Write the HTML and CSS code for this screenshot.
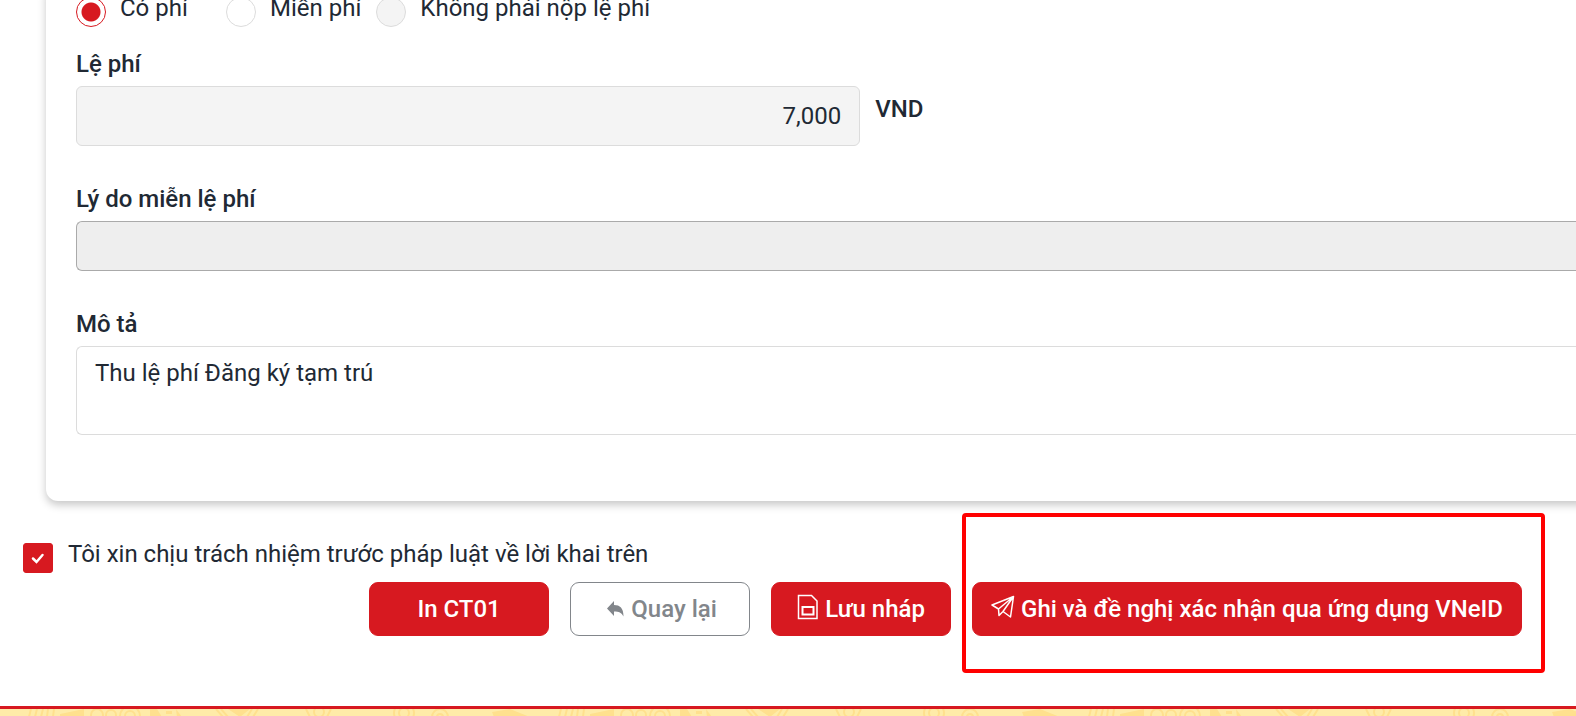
FILE: index.html
```html
<!DOCTYPE html>
<html lang="vi">
<head>
<meta charset="utf-8">
<title>Đăng ký tạm trú</title>
<link rel="stylesheet" href="styles.css">
</head>
<body>
<main class="page">
  <section class="card">
    <div class="options">
      <label class="choice"><input class="mark radio" type="radio" name="fee" checked><span>Có phí</span></label>
      <label class="choice"><input class="mark radio" type="radio" name="fee"><span>Miễn phí</span></label>
      <label class="choice"><input class="mark radio" type="radio" name="fee" disabled><span>Không phải nộp lệ phí</span></label>
    </div>
    <div class="field">
      <label class="label" for="amount">Lệ phí</label>
      <div class="amount-row">
        <input class="control amount" id="amount" type="text" value="7,000" readonly>
        <span class="unit">VND</span>
      </div>
    </div>
    <div class="field">
      <label class="label" for="reason">Lý do miễn lệ phí</label>
      <input class="control wide reason" id="reason" type="text" disabled>
    </div>
    <div class="field">
      <label class="label" for="note">Mô tả</label>
      <textarea class="control wide note" id="note">Thu lệ phí Đăng ký tạm trú</textarea>
    </div>
  </section>

  <label class="choice agree"><input class="mark check" type="checkbox" checked><span>Tôi xin chịu trách nhiệm trước pháp luật về lời khai trên</span></label>

  <div class="actions">
    <button class="btn" type="button">In CT01</button>
    <button class="btn btn-outline" type="button">
      <svg width="22" height="16" viewBox="-4 0 22 16" aria-hidden="true"><path fill="currentColor" d="M7 0v4c6 0 9.500 3 9.500 11.500C14.500 11.500 12 10.500 7 10.500V15L0 7.500z"/></svg>
      <span>Quay lại</span>
    </button>
    <button class="btn" type="button">
      <svg class="raised" width="22" height="26" viewBox="0 0 22 26" fill="none" stroke="currentColor" aria-hidden="true"><path stroke-width="1.500" d="M1.500 1.500h13l5.500 5.500v17.500H1.500z"/><path stroke-width="2" d="M5.500 13h11v7.500h-11z"/></svg>
      <span>Lưu nháp</span>
    </button>
    <div class="highlight">
      <button class="btn" type="button">
        <svg class="raised" width="24" height="24" viewBox="0 0 24 24" fill="none" stroke="currentColor" stroke-width="1.500" stroke-linejoin="round" aria-hidden="true"><path d="M1 10L22.500 1.500 19.500 22 12 16.500 8 20.500 7.500 14zM7.500 14L22.500 1.500 12 16.500"/></svg>
        <span>Ghi và đề nghị xác nhận qua ứng dụng VNeID</span>
      </button>
    </div>
  </div>
</main>
<footer class="footer">
  <svg class="pattern" width="100%" height="8" aria-hidden="true">
    <defs>
      <pattern id="motif" width="530" height="8" patternUnits="userSpaceOnUse">
        <g fill="none" stroke="#ffe08e" stroke-width="2">
          <path d="M29 8l2-8M35 8l2-8M41 8l2-8M47 8l1-8M53 8l1-8"/>
          <circle cx="97" cy="6" r="6"/><circle cx="111" cy="6" r="5"/><circle cx="130" cy="7" r="10"/><circle cx="130" cy="7" r="5"/>
          <path d="M216 0l7 8M221 0l7 8M252 0l-5 8M258 0l-5 8"/>
          <circle cx="319" cy="3" r="5"/><path d="M306 0l4 8M331 0l-4 8"/>
          <circle cx="404" cy="4" r="5"/><circle cx="404" cy="4" r="10"/><circle cx="440" cy="8" r="8"/><circle cx="440" cy="8" r="3"/>
        </g>
        <g fill="#ffe08e">
          <path d="M60 5l24-5v8H60zM150 0h7l5 8h-12zM166 2h6v3h-6zM176 0l6 8h-5zM228 0h22l-10 8zM492 3l18-3 20 8h-36z"/>
        </g>
      </pattern>
    </defs>
    <rect width="100%" height="8" fill="url(#motif)"/>
  </svg>
</footer>
</body>
</html>
```
FILE: styles.css
```css
* { box-sizing: border-box; }

body {
  margin: 0;
  height: 100vh;
  overflow: hidden;
  background: #fff;
  color: #212934;
  font: 400 24px/36px Roboto, "Noto Sans", sans-serif;
}

input, textarea, button { font: inherit; color: inherit; }

.page { margin-top: -10px; }

.card {
  margin: 0 -8px 0 46px;
  padding: 0 0 66px 30px;
  border-bottom-left-radius: 12px;
  box-shadow: 0 4px 8px rgba(0, 0, 0, .22);
}

.options { display: flex; gap: 15px; }

.choice {
  display: flex;
  align-items: flex-start;
  gap: 14px;
  min-width: 135px;
}

.mark {
  appearance: none;
  flex: none;
  width: 30px;
  height: 30px;
  margin: 7px 0 0;
  border: 1px solid #dcdcdc;
  background: #fff;
}

.radio { border-radius: 50%; }
.radio:disabled { background: #f4f4f4; }
.radio:checked {
  border-color: #d71920;
  background: radial-gradient(circle, #d71920 9px, #fff 10px);
}

.check { border-radius: 3px; }
.check:checked {
  border-color: #d71920;
  background: #d71920 url("data:image/svg+xml,%3Csvg xmlns='http://www.w3.org/2000/svg' viewBox='0 0 30 30'%3E%3Cpath d='M10 15.500l3.500 3.500 6-7' fill='none' stroke='white' stroke-width='2.500' stroke-linecap='round'/%3E%3C/svg%3E") center / 30px;
}

.field { margin-top: 35px; }
.options + .field { margin-top: 19px; }

.label {
  display: block;
  margin-bottom: 4px;
  font-weight: 500;
}

.amount-row { display: flex; gap: 15px; }

.control {
  display: block;
  border: 1px solid #dcdcdc;
  border-radius: 6px;
  padding: 8px 18px;
}

.amount {
  width: 52%;
  height: 60px;
  background: #f4f4f4;
  text-align: right;
}

.unit { margin-top: 5px; font-weight: 500; }

.wide {
  width: 100%;
  border-right: 0;
  border-radius: 6px 0 0 6px;
}

.reason {
  height: 50px;
  border-color: #aaa;
  background: #eee;
}

.note {
  height: 89px;
  background: #fff;
  resize: none;
}

.agree {
  gap: 15px;
  margin: 35px 0 0 23px;
}

.actions {
  display: flex;
  justify-content: flex-end;
  gap: 21px;
  margin: 9px 54px 0 23px;
}

.btn {
  display: flex;
  align-items: center;
  justify-content: center;
  gap: 6px;
  min-width: 180px;
  height: 54px;
  padding: 0 18px;
  border: 1px solid #d71920;
  border-radius: 9px;
  background: #d71920;
  color: #fff;
  font-weight: 500;
  white-space: nowrap;
}

.btn-outline {
  border-color: #82868b;
  background: #fff;
  color: #82868b;
}

.raised { margin-bottom: 4px; }

.highlight { position: relative; }
.highlight::after {
  content: "";
  position: absolute;
  inset: -69px -23px -37px -10px;
  border: 4px solid #f00;
  border-radius: 4px;
  pointer-events: none;
}

.footer {
  margin-top: 70px;
  border-top: 3px solid #d71920;
  background: #ffeba8;
}

.pattern { display: block; }
```
